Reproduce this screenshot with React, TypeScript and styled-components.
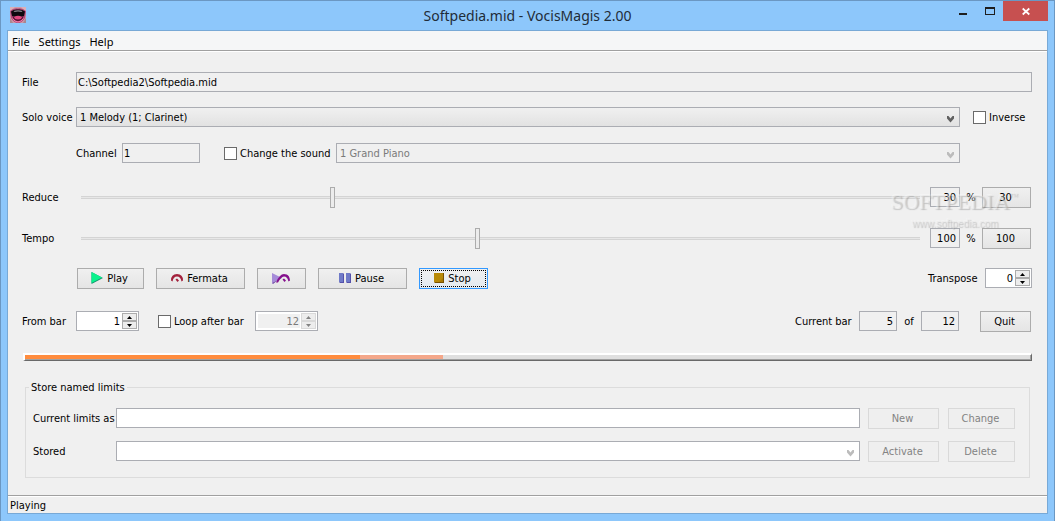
import React from "react";
import styled, { createGlobalStyle, css } from "styled-components";

const Global = createGlobalStyle`
  * { box-sizing: border-box; }
  body { margin: 0; background: #8dc7fb; }
  body, button, input, select {
    font-family: "DejaVu Sans Condensed", "Noto Sans", sans-serif;
    font-size: 11px;
    line-height: 13px;
    color: #000;
  }
`;

const Window = styled.div`
  display: flex;
  flex-direction: column;
  min-height: 100vh;
  padding: 0 6px 7px;
  border: 1px solid #6b97c2;
  background: #8dc7fb;
`;

const TitleBar = styled.header`
  display: grid;
  grid-template-columns: 1fr auto 1fr;
  height: 29px;
`;

const AppIcon = styled.svg`
  width: 16px;
  height: 16px;
  margin: 6px 0 0 3px;
`;

const Title = styled.h1`
  margin: 0;
  font: 400 14px/29px "Noto Sans", "Open Sans", sans-serif;
  color: #1f2c38;
`;

const Controls = styled.div`
  display: flex;
  justify-content: flex-end;
`;

const ControlButton = styled.button<{ $close?: boolean }>`
  width: ${(p) => (p.$close ? 45 : 27)}px;
  height: 20px;
  padding: 0;
  border: 0;
  background: ${(p) => (p.$close ? "#c75050" : "transparent")};
  svg { display: block; margin: 0 auto; }
`;

const Client = styled.div`
  display: flex;
  flex: 1;
  flex-direction: column;
  border: 1px solid #78a9d6;
  background: #f0f0f0;
`;

const MenuBar = styled.nav`
  display: flex;
  gap: 9px;
  height: 21px;
  padding-left: 4px;
  border-bottom: 1px solid #fff;
  background: #f5f6f7;
  box-shadow: inset 0 -1px #a0a0a0;
`;

const MenuItem = styled.button`
  padding: 0;
  border: 0;
  background: none;
  font: 11px/19px "Noto Sans", "Open Sans", sans-serif;
`;

const Main = styled.main`
  flex: 1;
  padding: 20px 15px 17px 14px;
`;

const Row = styled.div<{ $gap?: number; $indent?: number; $end?: number; $h?: number }>`
  display: flex;
  align-items: flex-start;
  height: ${(p) => p.$h ?? 21}px;
  margin-top: ${(p) => p.$gap ?? 0}px;
  padding-left: ${(p) => p.$indent ?? 0}px;
  padding-right: ${(p) => p.$end ?? 0}px;
`;

const Label = styled.label<{ $w?: number; $center?: boolean }>`
  flex: none;
  width: ${(p) => (p.$w ? p.$w + "px" : "auto")};
  line-height: 22px;
  white-space: nowrap;
  text-align: ${(p) => (p.$center ? "center" : "left")};
`;

const Spacer = styled.div`
  flex: 1;
`;

const Field = styled.input<{ $w?: number; $right?: boolean; $white?: boolean }>`
  flex: ${(p) => (p.$w ? "none" : "1")};
  width: ${(p) => (p.$w ? p.$w + "px" : "auto")};
  min-width: 0;
  height: 20px;
  padding: 0 3px 0 1px;
  border: 1px solid #abadb3;
  border-radius: 0;
  outline: 0;
  background: ${(p) => (p.$white ? "#fff" : "#f0f0f0")};
  text-align: ${(p) => (p.$right ? "right" : "left")};
`;

const SelectWrap = styled.div`
  position: relative;
  flex: 1;
  min-width: 0;
  height: 20px;
  svg {
    position: absolute;
    right: 5px;
    top: 8px;
    pointer-events: none;
  }
`;

const Select = styled.select<{ $look: "active" | "disabled" | "empty" }>`
  appearance: none;
  display: block;
  width: 100%;
  height: 20px;
  padding: 0 20px 0 3px;
  border: 1px solid #abadb3;
  border-radius: 0;
  background: ${(p) =>
    p.$look === "active"
      ? "linear-gradient(#f0f0f0, #e2e2e2)"
      : p.$look === "empty"
      ? "#fff"
      : "#f0f0f0"};
  color: ${(p) => (p.$look === "disabled" ? "#7a7a7a" : "#000")};
  opacity: 1;
`;

const Check = styled.label<{ $w: number }>`
  display: flex;
  flex: none;
  align-items: center;
  gap: 3px;
  width: ${(p) => p.$w}px;
  height: 20px;
  white-space: nowrap;
  input {
    appearance: none;
    flex: none;
    width: 13px;
    height: 13px;
    margin: 0;
    border: 1px solid #6a6a6a;
    background: #fff;
  }
`;

const Slot = styled.div<{ $before: number }>`
  flex: none;
  margin-left: ${(p) => p.$before}px;
`;

const Range = styled.input`
  appearance: none;
  flex: 1;
  min-width: 0;
  height: 21px;
  margin: 0 10px 0 0;
  background: linear-gradient(#d4d4d4, #d4d4d4) 2px 9px / 100% 1px no-repeat,
    linear-gradient(#d4d4d4, #d4d4d4) 2px 11px / 100% 1px no-repeat,
    linear-gradient(#e7e7e7, #e7e7e7) 2px 10px / 100% 1px no-repeat;
  &::-webkit-slider-thumb {
    appearance: none;
    width: 5px;
    height: 21px;
    border: 1px solid #acacac;
    border-radius: 0;
    background: #ececec;
  }
`;

const Button = styled.button<{ $w: number; $focused?: boolean }>`
  display: flex;
  flex: none;
  align-items: center;
  justify-content: center;
  gap: 4px;
  width: ${(p) => p.$w}px;
  height: 21px;
  padding: 0 2px 1px 0;
  border: 1px solid #acacac;
  background: linear-gradient(#f0f0f0, #e5e5e5);
  white-space: nowrap;
  &:disabled {
    border-color: #d9d9d9;
    background: #efefef;
    color: #838383;
  }
  ${(p) =>
    p.$focused &&
    css`
      border-color: #3399ff;
      background: linear-gradient(#f0f0f0, #e3eaf0);
      outline: 1px dotted #000;
      outline-offset: -3px;
    `}
`;

const Transport = styled.div`
  display: flex;
  gap: 12px;
`;

const SpinBox = styled.div<{ $w: number; $off?: boolean }>`
  display: flex;
  flex: none;
  width: ${(p) => p.$w}px;
  height: 20px;
  padding: 1px;
  border: 1px solid #abadb3;
  background: #fff;
  input {
    appearance: textfield;
    flex: 1;
    min-width: 0;
    margin: 1px;
    padding: 0 1px 0 0;
    border: 0;
    outline: 0;
    background: ${(p) => (p.$off ? "#f0f0f0" : "#fff")};
    color: ${(p) => (p.$off ? "#7a7a7a" : "#000")};
    text-align: right;
  }
  input::-webkit-inner-spin-button { appearance: none; display: none; }
`;

const Arrows = styled.div<{ $off?: boolean }>`
  display: flex;
  flex-direction: column;
  width: 15px;
  button {
    flex: 1;
    display: flex;
    align-items: center;
    justify-content: center;
    padding: 0;
    border: 1px solid ${(p) => (p.$off ? "#d9d9d9" : "#acacac")};
    background: #ededed;
    color: ${(p) => (p.$off ? "#838383" : "#000")};
  }
`;

const Progress = styled.div`
  display: flex;
  height: 8px;
  margin: 21px 0 20px 1px;
  border-style: solid;
  border-width: 2px 1px 1px 2px;
  border-color: #fff #696969 #696969 #fff;
  background: #dfdfdf;
  box-shadow: inset -1px -1px #a0a0a0;
`;

const Segment = styled.div<{ $color: string }>`
  height: 4px;
  background: ${(p) => p.$color};
`;

const Limits = styled.fieldset`
  min-width: 0;
  margin: 0 2px 0 3px;
  padding: 14px 14px 15px 3px;
  border: 1px solid #dcdcdc;
  legend { padding: 0 2px; }
`;

const Second = styled.div`
  display: flex;
  flex: none;
  gap: 9px;
  margin-left: 8px;
`;

const StatusBar = styled.footer`
  height: 18px;
  padding-left: 2px;
  border-top: 1px solid #a0a0a0;
  box-shadow: inset 0 1px #fff;
  line-height: 19px;
`;

const Sliders = styled.section`
  position: relative;
  margin-top: 24px;
`;

const Watermark = styled.div`
  position: absolute;
  right: 7px;
  top: 3px;
  width: 134px;
  pointer-events: none;
  color: rgba(236, 236, 236, 0.3);
  text-shadow: 1px 1px 1px rgba(110, 110, 110, 0.35), -1px -1px 0 rgba(255, 255, 255, 0.3);
  font: 22px/24px "Liberation Serif", serif;
  sup { font-size: 9px; line-height: 9px; vertical-align: 10px; }
  small {
    display: block;
    padding-left: 21px;
    font: 10px/20px "Liberation Sans", sans-serif;
  }
`;

const Chevron = ({ color }: { color: string }) => (
  <svg width="9" height="8" viewBox="0 0 9 8">
    <path d="M1 1h1.500l2 2.500L6.500 1H8v2.500L4.500 7.500 1 3.500z" fill={color} />
  </svg>
);

const Mouth = () => (
  <AppIcon viewBox="0 0 16 16">
    <rect width="16" height="16" fill="#cf9aa6" />
    <path d="M0 0h5L1 3 0 6zM11 0h5v5z" fill="#dcb0b8" />
    <path d="M0 4Q4 .5 8 1.500 12 .5 16 4L15 11Q12 16 8 16 4 16 1 11z" fill="#b2487a" />
    <path d="M1 4.500Q4 2 8 2.500 12 2 15 4.500L14 9Q8 11 2 9z" fill="#0d080d" />
    <path d="M3.500 4Q8 2.500 12.500 4L11.500 5Q8 4 4.500 5z" fill="#8e8791" />
    <path d="M2.500 9Q5 11.500 8 10.500 11 11.500 13.500 9L12.500 12Q10.500 14 8 14 5.500 14 3.500 12z" fill="#571231" />
    <path d="M4 10Q8 7.500 12 10 11.500 12.500 8 12.500 4.500 12.500 4 10z" fill="#e0477f" />
    <path d="M2.500 11.500Q5 15 8 15 11 15 13.500 11.500" fill="none" stroke="#f07ba6" />
    <path d="M0 11l3 5H0zM16 11l-3 5h3z" fill="#a98791" />
  </AppIcon>
);

const PlayIcon = () => (
  <svg width="12" height="12" viewBox="0 0 12 12">
    <path d="M.5 0L12 6 .5 12z" fill="#12906c" />
    <path d="M.5 0L11 5.500 .5 11z" fill="#0af28c" />
  </svg>
);

const FermataIcon = () => (
  <svg width="12" height="12" viewBox="0 0 12 12">
    <path d="M0 8.500Q0 2 6 2 12 2 12 8.500L10.500 9.500Q9.500 4.500 6 4.500 2.500 4.500 1.500 9.500z" fill="#a3213c" />
    <path d="M4.500 7.500L6 6.500 8 8.500 6.500 10z" fill="#a3213c" />
  </svg>
);

const PlayFermataIcon = () => (
  <svg width="18" height="12" viewBox="0 0 18 12">
    <path d="M0 1L10 6 0 11z" fill="#a58bd8" />
    <path d="M0 11L6 8l-5 4z" fill="#6a3fa5" />
    <path d="M4 10.500Q7.500 2 12 2 17.500 2 18 8.500L16.500 9.500Q15.500 4.500 12 4.500 9 5 6 10.500z" fill="#85108d" />
    <path d="M10.500 7.500L12 6.500 14 8.500 12.500 10z" fill="#85108d" />
  </svg>
);

const PauseIcon = () => (
  <svg width="12" height="10" viewBox="0 0 12 10">
    <path d="M0 0h4l1 1v9H1L0 9zM7 0h4l1 1v9H8L7 9z" fill="#5450aa" />
    <path d="M0 0h4v9H0zM7 0h4v9H7z" fill="#6f7ac8" />
  </svg>
);

const StopIcon = () => (
  <svg width="10" height="10" viewBox="0 0 10 10">
    <path d="M0 0h10v10H1L0 9z" fill="#7a5200" />
    <path d="M0 0h9v9H0z" fill="#b88a08" />
    <path d="M9 5v4H5z" fill="#a97800" />
  </svg>
);

interface SpinProps {
  id: string;
  value: number;
  width: number;
  off?: boolean;
  label?: string;
}

const Spin = ({ id, value, width, off, label }: SpinProps) => (
  <SpinBox $w={width} $off={off}>
    <input id={id} type="number" defaultValue={value} disabled={off} aria-label={label} />
    <Arrows $off={off}>
      <button type="button" disabled={off} aria-label="Increase">
        <svg width="5" height="3" viewBox="0 0 5 3"><path d="M0 3L2.500 0 5 3z" fill="currentColor" /></svg>
      </button>
      <button type="button" disabled={off} aria-label="Decrease">
        <svg width="5" height="3" viewBox="0 0 5 3"><path d="M0 0h5L2.500 3z" fill="currentColor" /></svg>
      </button>
    </Arrows>
  </SpinBox>
);

interface SliderProps {
  id: string;
  label: string;
  min: number;
  max: number;
  value: number;
  gap?: number;
}

const SliderRow = ({ id, label, min, max, value, gap }: SliderProps) => (
  <Row $gap={gap} $end={1}>
    <Label htmlFor={id} $w={57}>{label}</Label>
    <Range id={id} type="range" min={min} max={max} defaultValue={value} />
    <Field $w={30} $right readOnly value={value} aria-label={`${label} percent`} />
    <Label as="span" $w={22} $center>%</Label>
    <Button $w={49}>{value}</Button>
  </Row>
);

export default function App() {
  return (
    <>
      <Global />
      <Window>
        <TitleBar>
          <Mouth />
          <Title>Softpedia.mid - VocisMagis 2.00</Title>
          <Controls>
            <ControlButton aria-label="Minimize">
              <svg width="8" height="20"><path d="M0 12h8v2H0z" fill="#1e1e1e" /></svg>
            </ControlButton>
            <ControlButton aria-label="Maximize">
              <svg width="10" height="20"><path d="M0 6h10v8H0zM1 8v5h8V8z" fill="#1e1e1e" fillRule="evenodd" /></svg>
            </ControlButton>
            <ControlButton $close aria-label="Close">
              <svg width="8" height="20"><path d="M.7 7.500l6.600 6M7.300 7.500l-6.600 6" stroke="#fff" strokeWidth="1.700" /></svg>
            </ControlButton>
          </Controls>
        </TitleBar>
        <Client>
          <MenuBar>
            <MenuItem>File</MenuItem>
            <MenuItem>Settings</MenuItem>
            <MenuItem>Help</MenuItem>
          </MenuBar>
          <Main>
            <Row $h={20}>
              <Label htmlFor="file" $w={54}>File</Label>
              <Field id="file" readOnly value="C:\Softpedia2\Softpedia.mid" />
            </Row>
            <Row $h={20} $gap={15}>
              <Label htmlFor="voice" $w={54}>Solo voice</Label>
              <SelectWrap>
                <Select id="voice" $look="active">
                  <option>1 Melody (1; Clarinet)</option>
                </Select>
                <Chevron color="#606060" />
              </SelectWrap>
              <Slot $before={13}>
                <Check $w={59}><input type="checkbox" />Inverse</Check>
              </Slot>
            </Row>
            <Row $h={20} $gap={16} $indent={54} $end={72}>
              <Label htmlFor="channel" $w={46}>Channel</Label>
              <Field id="channel" $w={78} readOnly value="1" />
              <Slot $before={24}>
                <Check $w={112}><input type="checkbox" />Change the sound</Check>
              </Slot>
              <SelectWrap>
                <Select aria-label="Sound" $look="disabled" disabled>
                  <option>1 Grand Piano</option>
                </Select>
                <Chevron color="#bcbcbc" />
              </SelectWrap>
            </Row>
            <Sliders>
              <SliderRow id="reduce" label="Reduce" min={0} max={100} value={30} />
              <SliderRow id="tempo" label="Tempo" min={10} max={200} value={100} gap={20} />
              <Watermark>SOFTPEDIA<sup>™</sup><small>www.softpedia.com</small></Watermark>
            </Sliders>
            <Row $gap={19} $indent={55}>
              <Transport>
                <Button $w={67}><PlayIcon />Play</Button>
                <Button $w={89}><FermataIcon />Fermata</Button>
                <Button $w={49} aria-label="Play with fermata"><PlayFermataIcon /></Button>
                <Button $w={89}><PauseIcon />Pause</Button>
                <Button $w={69} $focused><StopIcon />Stop</Button>
              </Transport>
              <Spacer />
              <Label htmlFor="transpose" $w={57}>Transpose</Label>
              <Spin id="transpose" value={0} width={47} />
            </Row>
            <Row $gap={22} $end={1}>
              <Label htmlFor="from" $w={54}>From bar</Label>
              <Spin id="from" value={1} width={63} />
              <Slot $before={19}>
                <Check $w={97}><input type="checkbox" />Loop after bar</Check>
              </Slot>
              <Spin id="loop" value={12} width={63} off label="Loop bar" />
              <Spacer />
              <Label htmlFor="current" $w={64}>Current bar</Label>
              <Field id="current" $w={38} $right readOnly value="5" />
              <Label htmlFor="total" $w={24} $center>of</Label>
              <Field id="total" $w={38} $right readOnly value="12" />
              <Slot $before={21}><Button $w={51}>Quit</Button></Slot>
            </Row>
            <Progress role="progressbar" aria-label="Song position">
              <Segment $color="#ff8c3e" style={{ width: "33.3%" }} />
              <Segment $color="#f4a78a" style={{ width: "8.25%" }} />
            </Progress>
            <Limits>
              <legend>Store named limits</legend>
              <Row $indent={4}>
                <Label htmlFor="limits" $w={83}>Current limits as</Label>
                <Field id="limits" $white />
                <Second>
                  <Button $w={71} disabled>New</Button>
                  <Button $w={67} disabled>Change</Button>
                </Second>
              </Row>
              <Row $gap={12} $indent={4}>
                <Label htmlFor="stored" $w={83}>Stored</Label>
                <SelectWrap>
                  <Select id="stored" $look="empty" disabled />
                  <Chevron color="#bcbcbc" />
                </SelectWrap>
                <Second>
                  <Button $w={71} disabled>Activate</Button>
                  <Button $w={67} disabled>Delete</Button>
                </Second>
              </Row>
            </Limits>
          </Main>
          <StatusBar>Playing</StatusBar>
        </Client>
      </Window>
    </>
  );
}
